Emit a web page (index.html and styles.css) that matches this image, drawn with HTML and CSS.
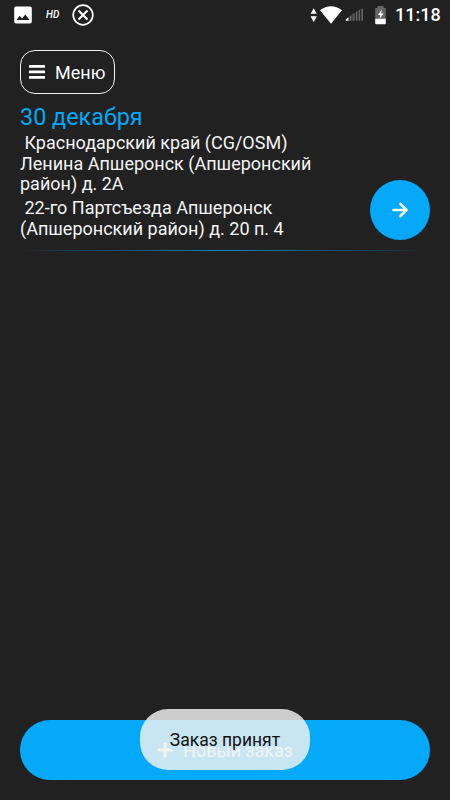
FILE: index.html
```html
<!DOCTYPE html>
<html lang="ru">
<head>
<meta charset="utf-8">
<title>Заказы</title>
<link rel="stylesheet" href="styles.css">
</head>
<body>
<div class="screen">
  <header class="status">
    <svg class="status-photo" width="18" height="18" viewBox="0 0 18 18"><path fill="#fff" fill-rule="evenodd" d="M2 0.5H16a1.8 1.8 0 0 1 1.8 1.8V15.700a1.800 1.800 0 0 1-1.800 1.800H2A1.800 1.800 0 0 1 .200 15.700V2.300A1.800 1.800 0 0 1 2 .500ZM2.500 14H15.500L11.300 8.400 8 12.600 5.700 9.800Z"/></svg>
    <span class="status-hd">HD</span>
    <svg class="status-close" width="22" height="22" viewBox="0 0 22 22" fill="none" stroke="#fff" stroke-width="1.700"><circle cx="11" cy="11" r="9.800"/><path stroke-width="2" d="M6.500 6.500l9 9M15.500 6.500l-9 9"/></svg>
    <span class="status-gap"></span>
    <svg class="status-system" width="78" height="22" viewBox="310 4 78 22">
      <path fill="#fff" d="M310.600 13.800L313.700 8.300 316.800 13.800ZM310.600 16.200H316.800L313.700 22.200Z"/>
      <path fill="#fff" d="M320 10.200Q331 2.200 342 10.200L331 23.800Z"/>
      <path fill="#fff" d="M345.800 20.700V19.500L348.500 17.200V20.700Z"/>
      <path fill="#656565" d="M349.500 20.700V16.500L351.500 15V20.700ZM352.500 20.700V14.200L354.500 12.700V20.700ZM355.800 20.700V12.200L357.500 10.800V20.700ZM358.700 20.700V10.200L360.200 9.200V20.700ZM361.400 20.700V8.900L363 8.200V20.700Z"/>
      <path fill="#656565" d="M377.500 6H383.500V8H385.800V19H375.200V8H377.500Z"/>
      <path fill="#fff" d="M375.200 18.700H385.800V23.200Q385.800 24.200 384.800 24.200H376.200Q375.200 24.200 375.200 23.200Z"/>
      <path fill="#fff" d="M381.800 9.500L378 15.100H380.300L379.700 18.700 383.600 13.600H381.200Z"/>
    </svg>
    <time class="clock">11:18</time>
  </header>
  <main class="content">
    <button class="menu">
      <svg width="16" height="16" viewBox="0 0 16 16" fill="#fff"><rect y="1" width="16" height="2.800" rx=".6"/><rect y="6.500" width="16" height="2.800" rx=".6"/><rect y="12" width="16" height="2.800" rx=".6"/></svg>
      <span>Меню</span>
    </button>
    <h1 class="date">30 декабря</h1>
    <section class="order">
      <div class="route">
        <p class="stop">&nbsp;Краснодарский край (CG/OSM)<br>Ленина Апшеронск (Апшеронский<br>район) д. 2А</p>
        <p class="stop">&nbsp;22-го Партсъезда Апшеронск<br>(Апшеронский район) д. 20 п. 4</p>
      </div>
      <button class="go" aria-label="Открыть">
        <svg width="18" height="18" viewBox="0 0 18 18" fill="none" stroke="#fff" stroke-width="2.500" stroke-linecap="round" stroke-linejoin="round"><path d="M2.500 9H15.500M9.300 2.800L15.500 9 9.300 15.200"/></svg>
      </button>
    </section>
    <div class="divider"></div>
  </main>
  <footer class="footer">
    <button class="new-order">
      <svg width="16" height="16" viewBox="0 0 16 16" fill="none" stroke="#fff" stroke-width="3.200" stroke-linecap="round"><path d="M8 2V14M2 8H14"/></svg>
      <span>Новый заказ</span>
    </button>
    <div class="toast">Заказ принят</div>
  </footer>
</div>
</body>
</html>
```

FILE: styles.css
```css
* { box-sizing: border-box; }

body {
  margin: 0;
  background: #212121;
  color: #fff;
  font-family: Roboto, "Noto Sans", sans-serif;
}

button {
  border: 0;
  padding: 0;
  color: inherit;
  font: inherit;
}

svg { display: block; flex: none; }

.screen {
  display: flex;
  flex-direction: column;
  height: 800px;
  overflow: hidden;
}

.status {
  display: flex;
  align-items: center;
  height: 30px;
  padding: 0 10px 0 14px;
}

.status-hd {
  margin-left: 14px;
  width: 14px;
  font-size: 10px;
  font-style: italic;
  font-weight: 500;
  line-height: 30px;
}

.status-close { margin-left: 12px; }

.status-gap { flex: 1; }

.clock {
  width: 45px;
  margin-left: 7px;
  font-size: 18px;
  font-weight: 500;
  line-height: 32px;
  white-space: nowrap;
}

.content {
  flex: 1;
  padding: 20px 20px 0;
}

.menu {
  display: flex;
  align-items: center;
  gap: 10px;
  width: 95px;
  height: 44px;
  padding-left: 8px;
  border: 1.500px solid #f2f2f2;
  border-radius: 15px;
  background: transparent;
  font-size: 18px;
}

.date {
  margin: 9px 0 0;
  color: #05a9f7;
  font-size: 23.400px;
  font-weight: 400;
  line-height: 28px;
}

.order {
  display: flex;
  justify-content: space-between;
  margin-top: 2px;
}

.stop {
  margin: 0 0 3px;
  color: #f4f4f4;
  font-size: 18px;
  line-height: 20.700px;
  white-space: nowrap;
}

.go {
  display: flex;
  align-items: center;
  justify-content: center;
  width: 60px;
  height: 60px;
  margin-top: 47px;
  border-radius: 50%;
  background: #05a9f7;
}

.divider {
  height: 1px;
  margin-top: 7px;
  background: linear-gradient(90deg, transparent, #0588c8 50%, transparent);
}

.footer {
  position: relative;
  padding: 0 20px 20px;
}

.new-order {
  display: flex;
  align-items: center;
  justify-content: center;
  gap: 10px;
  width: 100%;
  height: 60px;
  border-radius: 30px;
  background: #05a9f7;
  font-size: 18px;
}

.toast {
  position: absolute;
  left: 140px;
  bottom: 30px;
  width: 170px;
  height: 61px;
  border-radius: 28px;
  background: rgba(241, 241, 241, .83);
  color: #111;
  font-size: 17.500px;
  line-height: 63px;
  text-align: center;
}
```
